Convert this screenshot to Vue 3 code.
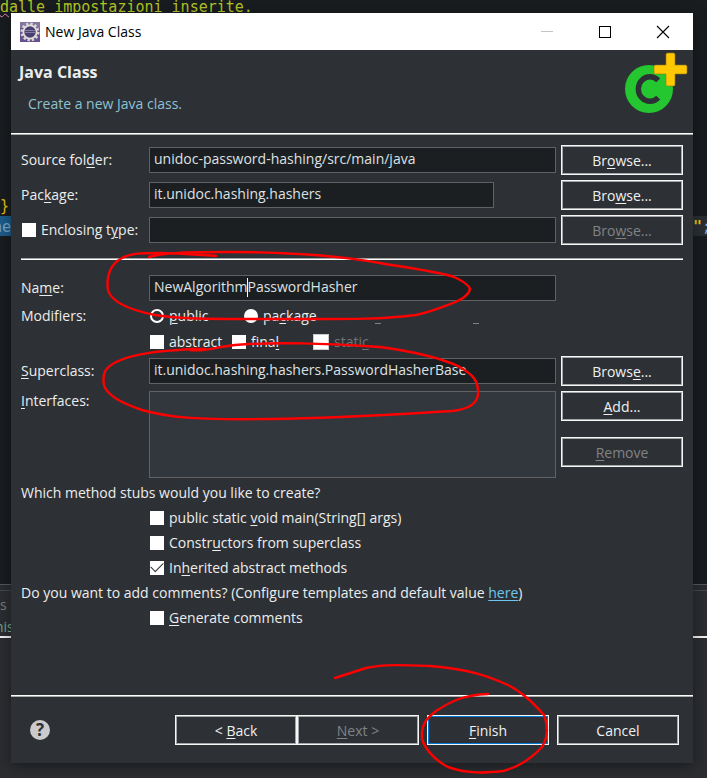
<script setup>
import { ref } from 'vue'

const sourceFolder = ref('unidoc-password-hashing/src/main/java')
const packageName = ref('it.unidoc.hashing.hashers')
const enclosingType = ref('')
const className = ref('NewAlgorithmPasswordHasher')
const superclass = ref('it.unidoc.hashing.hashers.PasswordHasherBase')
const useEnclosing = ref(false)
const access = ref('public')
const isAbstract = ref(false)
const isFinal = ref(false)
const isStatic = ref(false)
const stubMain = ref(false)
const stubConstructors = ref(false)
const stubInherited = ref(true)
const generateComments = ref(false)
</script>

<template>
  <div class="screen">
    <div class="workbench">
      <div class="editor">
        <div class="code-line doc"><span class="misspelt">d</span>alle impostazioni inserite.</div>
        <div class="code-line brace"><span>}</span></div>
        <div class="code-line current"><span class="selected">ne</span><span class="tail"><b>"</b>;</span></div>
      </div>
      <div class="console">
        <div class="console-tab">s</div>
        <div class="console-status">nis</div>
      </div>
    </div>

    <main class="dialog">
      <div class="titlebar">
        <svg class="app-icon" viewBox="0 0 20 20" aria-hidden="true">
          <rect width="20" height="20" fill="#66518f" />
          <rect y="0" width="20" height="6" fill="#8475a3" />
          <circle cx="10" cy="10" r="8.2" fill="none" stroke="#d8d4cf" stroke-width="2.6" stroke-dasharray="2.4 1.9" />
          <circle cx="10" cy="10" r="6.6" fill="#4b3f72" stroke="#e2dfda" stroke-width="1.8" />
          <path d="M5 8.5h10M5 10.5h10" stroke="#8579a8" stroke-width="1.2" />
        </svg>
        <span class="caption">New Java Class</span>
        <button class="win-button" aria-label="Minimize">
          <svg viewBox="0 0 14 14"><path d="M1 6.5h12" stroke="#c4c4c4" /></svg>
        </button>
        <button class="win-button" aria-label="Maximize">
          <svg viewBox="0 0 14 14"><rect x="1.5" y="1.5" width="11" height="11" fill="none" stroke="#000" /></svg>
        </button>
        <button class="win-button" aria-label="Close">
          <svg viewBox="0 0 14 14"><path d="M1 1l12 12M13 1L1 13" stroke="#000" stroke-width="1.1" /></svg>
        </button>
      </div>

      <header class="banner">
        <div>
          <h1>Java Class</h1>
          <p>Create a new Java class.</p>
        </div>
        <svg class="class-icon" viewBox="0 0 64 64" aria-hidden="true">
          <circle cx="25" cy="37" r="24" fill="#25c731" />
          <path d="M34.2 28.4A11.6 12.3 0 1 0 34.2 45.600" fill="none" stroke="#2d3135" stroke-width="5.4" />
          <path d="M43.5 1h6a1.5 1.5 0 0 1 1.500 1.500V13H61.500a1.500 1.500 0 0 1 1.500 1.500v6a1.500 1.500 0 0 1-1.500 1.500H51v10.500a1.500 1.500 0 0 1-1.500 1.500h-6a1.500 1.500 0 0 1-1.500-1.500V22H31.500a1.500 1.500 0 0 1-1.500-1.500v-6a1.500 1.500 0 0 1 1.500-1.500H42V2.500A1.500 1.500 0 0 1 43.500 1z" fill="#ffc800" stroke="#8a7a1c" stroke-width=".6" />
        </svg>
      </header>

      <form class="form" @submit.prevent>
        <section class="group">
          <div class="row">
            <label for="source">Source fol<u>d</u>er:</label>
            <input id="source" v-model="sourceFolder" class="field" type="text" />
            <button type="button" class="push">Br<u>o</u>wse...</button>
          </div>
          <div class="row">
            <label for="package">Pac<u>k</u>age:</label>
            <input id="package" v-model="packageName" class="field short" type="text" />
            <button type="button" class="push">Bro<u>w</u>se...</button>
          </div>
          <div class="row">
            <label class="check"><input v-model="useEnclosing" type="checkbox" />Enclosing t<u>y</u>pe:</label>
            <input v-model="enclosingType" class="field" type="text" aria-label="Enclosing type" />
            <button type="button" class="push" disabled>Bro<u>w</u>se...</button>
          </div>
        </section>

        <hr />

        <div class="row">
          <label for="name">Na<u>m</u>e:</label>
          <div class="caret-box">
            <input id="name" v-model="className" class="field" type="text" />
            <span class="caret"></span>
          </div>
        </div>

        <div class="modifiers">
          <span class="modifiers-label">Modifiers:</span>
          <div class="options access">
            <label class="check"><input v-model="access" type="radio" name="access" value="public" /><span><u>p</u>ublic</span></label>
            <label class="check"><input v-model="access" type="radio" name="access" value="package" /><span>pa<u>c</u>kage</span></label>
            <i class="mnemonic"></i>
            <i class="mnemonic"></i>
          </div>
          <div class="options flags">
            <label class="check"><input v-model="isAbstract" type="checkbox" /><span>abs<u>t</u>ract</span></label>
            <label class="check"><input v-model="isFinal" type="checkbox" /><span>fina<u>l</u></span></label>
            <label class="check off"><input v-model="isStatic" type="checkbox" disabled /><span>stati<u>c</u></span></label>
          </div>
        </div>

        <section class="group">
          <div class="row">
            <label for="super"><u>S</u>uperclass:</label>
            <input id="super" v-model="superclass" class="field" type="text" />
            <button type="button" class="push">Brows<u>e</u>...</button>
          </div>
          <div class="row tall">
            <label for="interfaces"><u>I</u>nterfaces:</label>
            <select id="interfaces" class="list" size="4"></select>
            <div class="stack">
              <button type="button" class="push"><u>A</u>dd...</button>
              <button type="button" class="push" disabled><u>R</u>emove</button>
            </div>
          </div>
        </section>

        <div class="stubs">
          <p>Which method stubs would you like to create?</p>
          <label class="check indent"><input v-model="stubMain" type="checkbox" /><span>public static <u>v</u>oid main(Strin<u>g</u>[] args)</span></label>
          <label class="check indent"><input v-model="stubConstructors" type="checkbox" /><span>Constr<u>u</u>ctors from superclass</span></label>
          <label class="check indent"><input v-model="stubInherited" type="checkbox" /><span>In<u>h</u>erited abstract methods</span></label>
          <p>Do you want to add comments? (Configure templates and default value <a href="#">here</a>)</p>
          <label class="check indent"><input v-model="generateComments" type="checkbox" /><span><u>G</u>enerate comments</span></label>
        </div>
      </form>

      <footer class="actions">
        <button class="help" aria-label="Help">?</button>
        <div class="pair">
          <button class="push">&lt; <u>B</u>ack</button>
          <button class="push" disabled><u>N</u>ext &gt;</button>
        </div>
        <button class="push primary"><u>F</u>inish</button>
        <button class="push">Cancel</button>
      </footer>
    </main>

    <svg class="marker" viewBox="0 0 707 778" aria-hidden="true">
      <path d="M149 257C168 252 190 252 230 252C290 252 340 256 380 263C415 269 440 272 454 277C463 281 469 286 470 289C469 295 463 299 453 303C440 308 430 312 416 315C380 320 340 319 260 319C205 319 180 319 155 315C125 309 111 301 108 290C106 277 110 264 122 258C132 253 140 253 160 253C180 253 200 255 216 256" />
      <path d="M190 350C205 352 215 347 235 345C270 342 330 343 380 347C410 351 440 358 458 366C472 374 478 380 478 391C479 402 472 409 452 411C400 414 340 418 270 419C200 420 170 418 142 410C118 402 106 393 104 385C102 373 105 368 116 362C135 353 160 351 192 349L205 349" />
      <path d="M335 678L366 668C385 664 405 665 430 666C470 669 490 677 508 685C524 693 535 705 544 715C549 728 547 739 542 747C530 760 515 768 503 771C485 773 467 774 448 767C432 759 423 745 422 738C421 724 427 718 436 711C450 702 462 695 488 694" />
    </svg>
  </div>
</template>

<style>
body {
  margin: 0;
  background: #191d20;
}
</style>

<style scoped>
* {
  box-sizing: border-box;
}

.screen {
  position: relative;
  display: grid;
  min-height: 100vh;
  overflow: hidden;
  color: #eceded;
  font: 14px/20px "Open Sans", "Noto Sans", sans-serif;
}

.workbench,
.dialog {
  grid-area: 1 / 1;
}

.workbench {
  display: flex;
  flex-direction: column;
  background: #2b2d31;
  font: 15px/20px "DejaVu Sans Mono", monospace;
}

.editor {
  display: flex;
  flex-direction: column;
  height: 585px;
  background: #191d20;
  border-bottom: 1px solid #54595c;
}

.code-line {
  display: flex;
  height: 20px;
}

.doc {
  height: 196px;
  line-height: 14px;
  color: #b5c524;
}

.misspelt {
  text-decoration: underline wavy #e68ab8 1px;
}

.brace {
  color: #e8c40a;
}

.current {
  justify-content: space-between;
  line-height: 22px;
  background: #2a2f34;
}

.selected {
  width: 100px;
  text-indent: -7px;
  background: #1c5c8c;
  color: #79a6c4;
}

.tail {
  width: 14px;
  color: #79abff;
}

.tail b {
  color: #e8c40a;
}

.console {
  flex: 1;
  margin-top: 5px;
  border-top: 1px solid #46494c;
  font: 14px/20px "Open Sans", "Noto Sans", sans-serif;
}

.console-tab {
  padding-top: 4px;
  color: #7a7c7e;
}

.console-status {
  height: 23px;
  text-indent: -5px;
  line-height: 24px;
  color: #6fae92;
  border-bottom: 2px solid #f0f0f0;
}

.dialog {
  display: flex;
  flex-direction: column;
  margin: 13px 14px 15px 11px;
  background: #2d3135;
  box-shadow: 0 3px 14px rgba(0, 0, 0, 0.4);
}

.titlebar {
  display: flex;
  align-items: center;
  height: 37px;
  padding: 0 1px 0 9px;
  background: #fff;
  color: #000;
}

.app-icon {
  width: 20px;
  height: 20px;
}

.caption {
  flex: 1;
  padding-left: 5px;
}

.win-button {
  display: flex;
  align-items: center;
  justify-content: center;
  width: 58px;
  height: 36px;
  padding: 0;
  border: 0;
  background: none;
}

.win-button svg {
  width: 14px;
  height: 14px;
}

.banner {
  display: flex;
  justify-content: space-between;
  height: 85px;
  padding: 2px 5px 0 8px;
  border-bottom: 2px ridge #fff;
}

h1 {
  margin: 10px 0 0;
  font-size: 16px;
  line-height: 20px;
}

.banner p {
  margin: 12px 0 0 9px;
  color: #8fc0d3;
}

.class-icon {
  width: 64px;
  height: 64px;
}

.form {
  flex: 1;
  padding: 10px 10px 0;
}

.group {
  display: grid;
  gap: 5px;
}

.row {
  display: grid;
  grid-template-columns: 128px 1fr 122px;
  align-items: center;
  min-height: 30px;
}

u {
  text-decoration-thickness: 1px;
  text-underline-offset: 2px;
}

.field {
  width: 100%;
  height: 26px;
  padding: 0 4px 3px;
  border: 1px solid #5f6162;
  background: #1b1f22;
  color: #dfe1e2;
  font: inherit;
  outline: 0;
}

.row > .field,
.row > .caret-box,
.row > .list {
  width: calc(100% - 5px);
}

.row > .short {
  width: calc(100% - 67px);
}

.caret-box {
  position: relative;
}

.caret {
  position: absolute;
  top: 3px;
  left: 98px;
  width: 1px;
  height: 19px;
  background: #fff;
}

.push {
  width: 122px;
  height: 30px;
  padding: 1px 0 0;
  border: 1px solid #f6f6f6;
  border-radius: 0;
  background: #2d3135;
  box-shadow: inset 0 0 0 1px #a3a5a7;
  color: #f0f0f0;
  font: inherit;
}

.push:disabled {
  color: #808284;
}

.primary {
  box-shadow: inset 0 0 0 1px #0078d7;
}

hr {
  height: 2px;
  margin: 13px 0;
  border: 0;
  border-top: 1px solid #a3a3a3;
  background: #fff;
}

.check {
  display: flex;
  align-items: center;
  gap: 5px;
  padding-left: 1px;
}

.check input {
  flex: none;
  display: grid;
  place-items: center;
  appearance: none;
  width: 14px;
  height: 14px;
  margin: 0;
  background: #fff;
}

.row .check {
  display: block;
  white-space: nowrap;
}

.row .check input {
  display: inline-block;
  margin-right: 5px;
  vertical-align: -2px;
}

.check input[type="radio"] {
  border-radius: 50%;
}

.check input[type="radio"]:checked {
  border: 2px solid #fff;
  background: #2d3135;
}

.check input[type="checkbox"]:checked::after {
  content: "";
  width: 11px;
  height: 6px;
  border: solid #333;
  border-width: 0 0 1px 1px;
  transform: translateY(-2px) rotate(-45deg);
}

.off {
  color: #707375;
}

.check.off input {
  width: 16px;
  height: 16px;
  border: 1px solid #ccc;
}

.modifiers {
  display: grid;
  grid-template-columns: 128px 1fr;
  grid-template-rows: 26px 25px;
  align-items: center;
  margin-bottom: 2px;
}

.options {
  grid-column: 2;
  display: grid;
}

.access {
  grid-template-columns: 94px 132px 98px 98px;
}

.flags {
  grid-template-columns: 82px 81px 100px;
}

.mnemonic {
  align-self: end;
  width: 6px;
  height: 1px;
  margin-bottom: 2px;
  background: #808284;
}

.row.tall {
  align-items: start;
}

.list {
  height: 87px;
  border: 1px solid #5f6162;
  border-radius: 0;
  background: #31373d;
  outline: 0;
}

.stack {
  display: grid;
  gap: 16px;
}

.stubs {
  display: grid;
  grid-auto-rows: 25px;
  align-items: center;
  margin-top: 2px;
}

.stubs p {
  margin: 0;
}

.indent {
  margin-left: 128px;
}

a {
  color: #6fc5ee;
  text-underline-offset: 2px;
}

.actions {
  display: flex;
  align-items: center;
  gap: 8px;
  height: 68px;
  padding: 0 14px 0 19px;
  border-top: 2px ridge #fff;
}

.help {
  width: 20px;
  height: 20px;
  margin-right: auto;
  padding: 0;
  border: 0;
  border-radius: 50%;
  background: #cbcbcb;
  color: #2d3135;
  font: bold 17px/20px "Open Sans", sans-serif;
}

.pair {
  display: flex;
}

.marker {
  position: absolute;
  top: 0;
  left: 0;
  width: 100%;
  pointer-events: none;
  fill: none;
  stroke: #f00;
  stroke-width: 2.4;
  stroke-linecap: round;
  stroke-linejoin: round;
}
</style>
